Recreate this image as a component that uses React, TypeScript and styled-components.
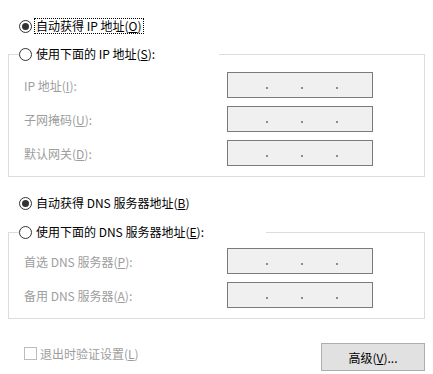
import React from 'react'
import styled, { createGlobalStyle } from 'styled-components'

const GlobalStyle = createGlobalStyle`
  html, body {
    margin: 0;
    padding: 0;
    background: #ffffff;
  }
  body {
    font-family: 'Noto Sans CJK SC', 'Noto Sans', sans-serif;
    font-size: 12px;
    color: #000000;
  }
`

type IpRow = { label: string; key: string; after?: string }

const ipRows: IpRow[] = [
  { label: 'IP 地址(', key: 'I', after: '):' },
  { label: '子网掩码(', key: 'U', after: '):' },
  { label: '默认网关(', key: 'D', after: '):' },
]

const dnsRows: IpRow[] = [
  { label: '首选 DNS 服务器(', key: 'P', after: '):' },
  { label: '备用 DNS 服务器(', key: 'A', after: '):' },
]

const Radio = ({ checked }: { checked?: boolean }) => (
  <St.Radio>{checked && <St.RadioDot />}</St.Radio>
)

const IpField = () => (
  <St.IpBox>
    <St.Segment />
    <St.Dot />
    <St.Segment />
    <St.Dot />
    <St.Segment />
    <St.Dot />
    <St.Segment />
  </St.IpBox>
)

const FieldRows = ({ rows }: { rows: IpRow[] }) => (
  <St.Grid>
    {rows.map((r) => (
      <React.Fragment key={r.key}>
        <St.Label>
          {r.label}
          <u>{r.key}</u>
          {r.after}
        </St.Label>
        <IpField />
      </React.Fragment>
    ))}
  </St.Grid>
)

export default function App() {
  return (
    <>
      <GlobalStyle />
      <St.Page>
        <St.RadioRow $top={18}>
          <Radio checked />
          <St.RadioText $focused>
            自动获得 IP 地址(<u>O</u>)
          </St.RadioText>
        </St.RadioRow>

        <St.Group $top={12} $padTop={10}>
          <St.Legend $width={200}>
            <St.LegendInner>
              <Radio />
              <St.RadioText>
                使用下面的 IP 地址(<u>S</u>):
              </St.RadioText>
            </St.LegendInner>
          </St.Legend>
          <FieldRows rows={ipRows} />
        </St.Group>

        <St.RadioRow $top={18}>
          <Radio checked />
          <St.RadioText>
            自动获得 DNS 服务器地址(<u>B</u>)
          </St.RadioText>
        </St.RadioRow>

        <St.Group $top={13} $padTop={8}>
          <St.Legend $width={247}>
            <St.LegendInner>
              <Radio />
              <St.RadioText>
                使用下面的 DNS 服务器地址(<u>E</u>):
              </St.RadioText>
            </St.LegendInner>
          </St.Legend>
          <FieldRows rows={dnsRows} />
        </St.Group>

        <St.Footer>
          <St.CheckRow>
            <St.CheckBox />
            <St.CheckText>
              退出时验证设置(<u>L</u>)
            </St.CheckText>
          </St.CheckRow>
          <St.Button type="button">
            高级(<u>V</u>)...
          </St.Button>
        </St.Footer>
      </St.Page>
    </>
  )
}

const St = {
  Page: styled.div`
    width: 433px;
    height: 374px;
    box-sizing: border-box;
    padding: 0 8px;
    display: flex;
    flex-direction: column;
    overflow: hidden;
  `,
  RadioRow: styled.div<{ $top: number }>`
    display: flex;
    align-items: center;
    height: 16px;
    margin-top: ${(p) => p.$top}px;
    padding-left: 11px;
  `,
  Radio: styled.span`
    box-sizing: border-box;
    width: 13px;
    height: 13px;
    flex: 0 0 13px;
    border: 1px solid #333333;
    border-radius: 50%;
    background: #ffffff;
    display: flex;
    align-items: center;
    justify-content: center;
    margin-right: 2px;
  `,
  RadioDot: styled.span`
    width: 7px;
    height: 7px;
    border-radius: 50%;
    background: #333333;
  `,
  RadioText: styled.span<{ $focused?: boolean }>`
    line-height: 14px;
    padding: 0 1px;
    white-space: nowrap;
    border: 1px dotted ${(p) => (p.$focused ? '#000000' : 'transparent')};
  `,
  Group: styled.fieldset<{ $top: number; $padTop: number }>`
    margin: ${(p) => p.$top}px 0 0;
    padding: ${(p) => p.$padTop}px 51px 10px 15px;
    border: 1px solid #dcdcdc;
    min-width: 0;
  `,
  Legend: styled.legend<{ $width: number }>`
    width: ${(p) => p.$width}px;
    box-sizing: border-box;
    margin-left: -5px;
    padding: 0;
    height: 16px;
  `,
  LegendInner: styled.div`
    display: flex;
    align-items: center;
    height: 16px;
  `,
  Grid: styled.div`
    display: grid;
    grid-template-columns: 1fr 146px;
    row-gap: 8px;
    align-items: center;
  `,
  Label: styled.span`
    color: #9d9d9d;
    white-space: nowrap;
  `,
  IpBox: styled.div`
    box-sizing: border-box;
    width: 146px;
    height: 26px;
    border: 1px solid #7a7a7a;
    background: #f0f0f0;
    display: flex;
    align-items: flex-start;
    padding: 14px 0 0 5px;
  `,
  Segment: styled.span`
    width: 33px;
    flex: 0 0 33px;
  `,
  Dot: styled.span`
    width: 2px;
    height: 2px;
    flex: 0 0 2px;
    background: #8c8c8c;
  `,
  Footer: styled.div`
    display: flex;
    justify-content: space-between;
    align-items: flex-start;
    margin-top: 24px;
    padding-left: 16px;
  `,
  CheckRow: styled.div`
    display: flex;
    align-items: center;
    gap: 3px;
    margin-top: 2px;
    height: 16px;
  `,
  CheckBox: styled.span`
    box-sizing: border-box;
    width: 13px;
    height: 13px;
    border: 1px solid #bcbcbc;
    background: #ffffff;
  `,
  CheckText: styled.span`
    color: #9d9d9d;
    white-space: nowrap;
  `,
  Button: styled.button`
    box-sizing: border-box;
    width: 104px;
    height: 28px;
    border: 1px solid #adadad;
    background: #e1e1e1;
    font-family: inherit;
    font-size: 12px;
    color: #000000;
    padding: 0;
  `,
}
